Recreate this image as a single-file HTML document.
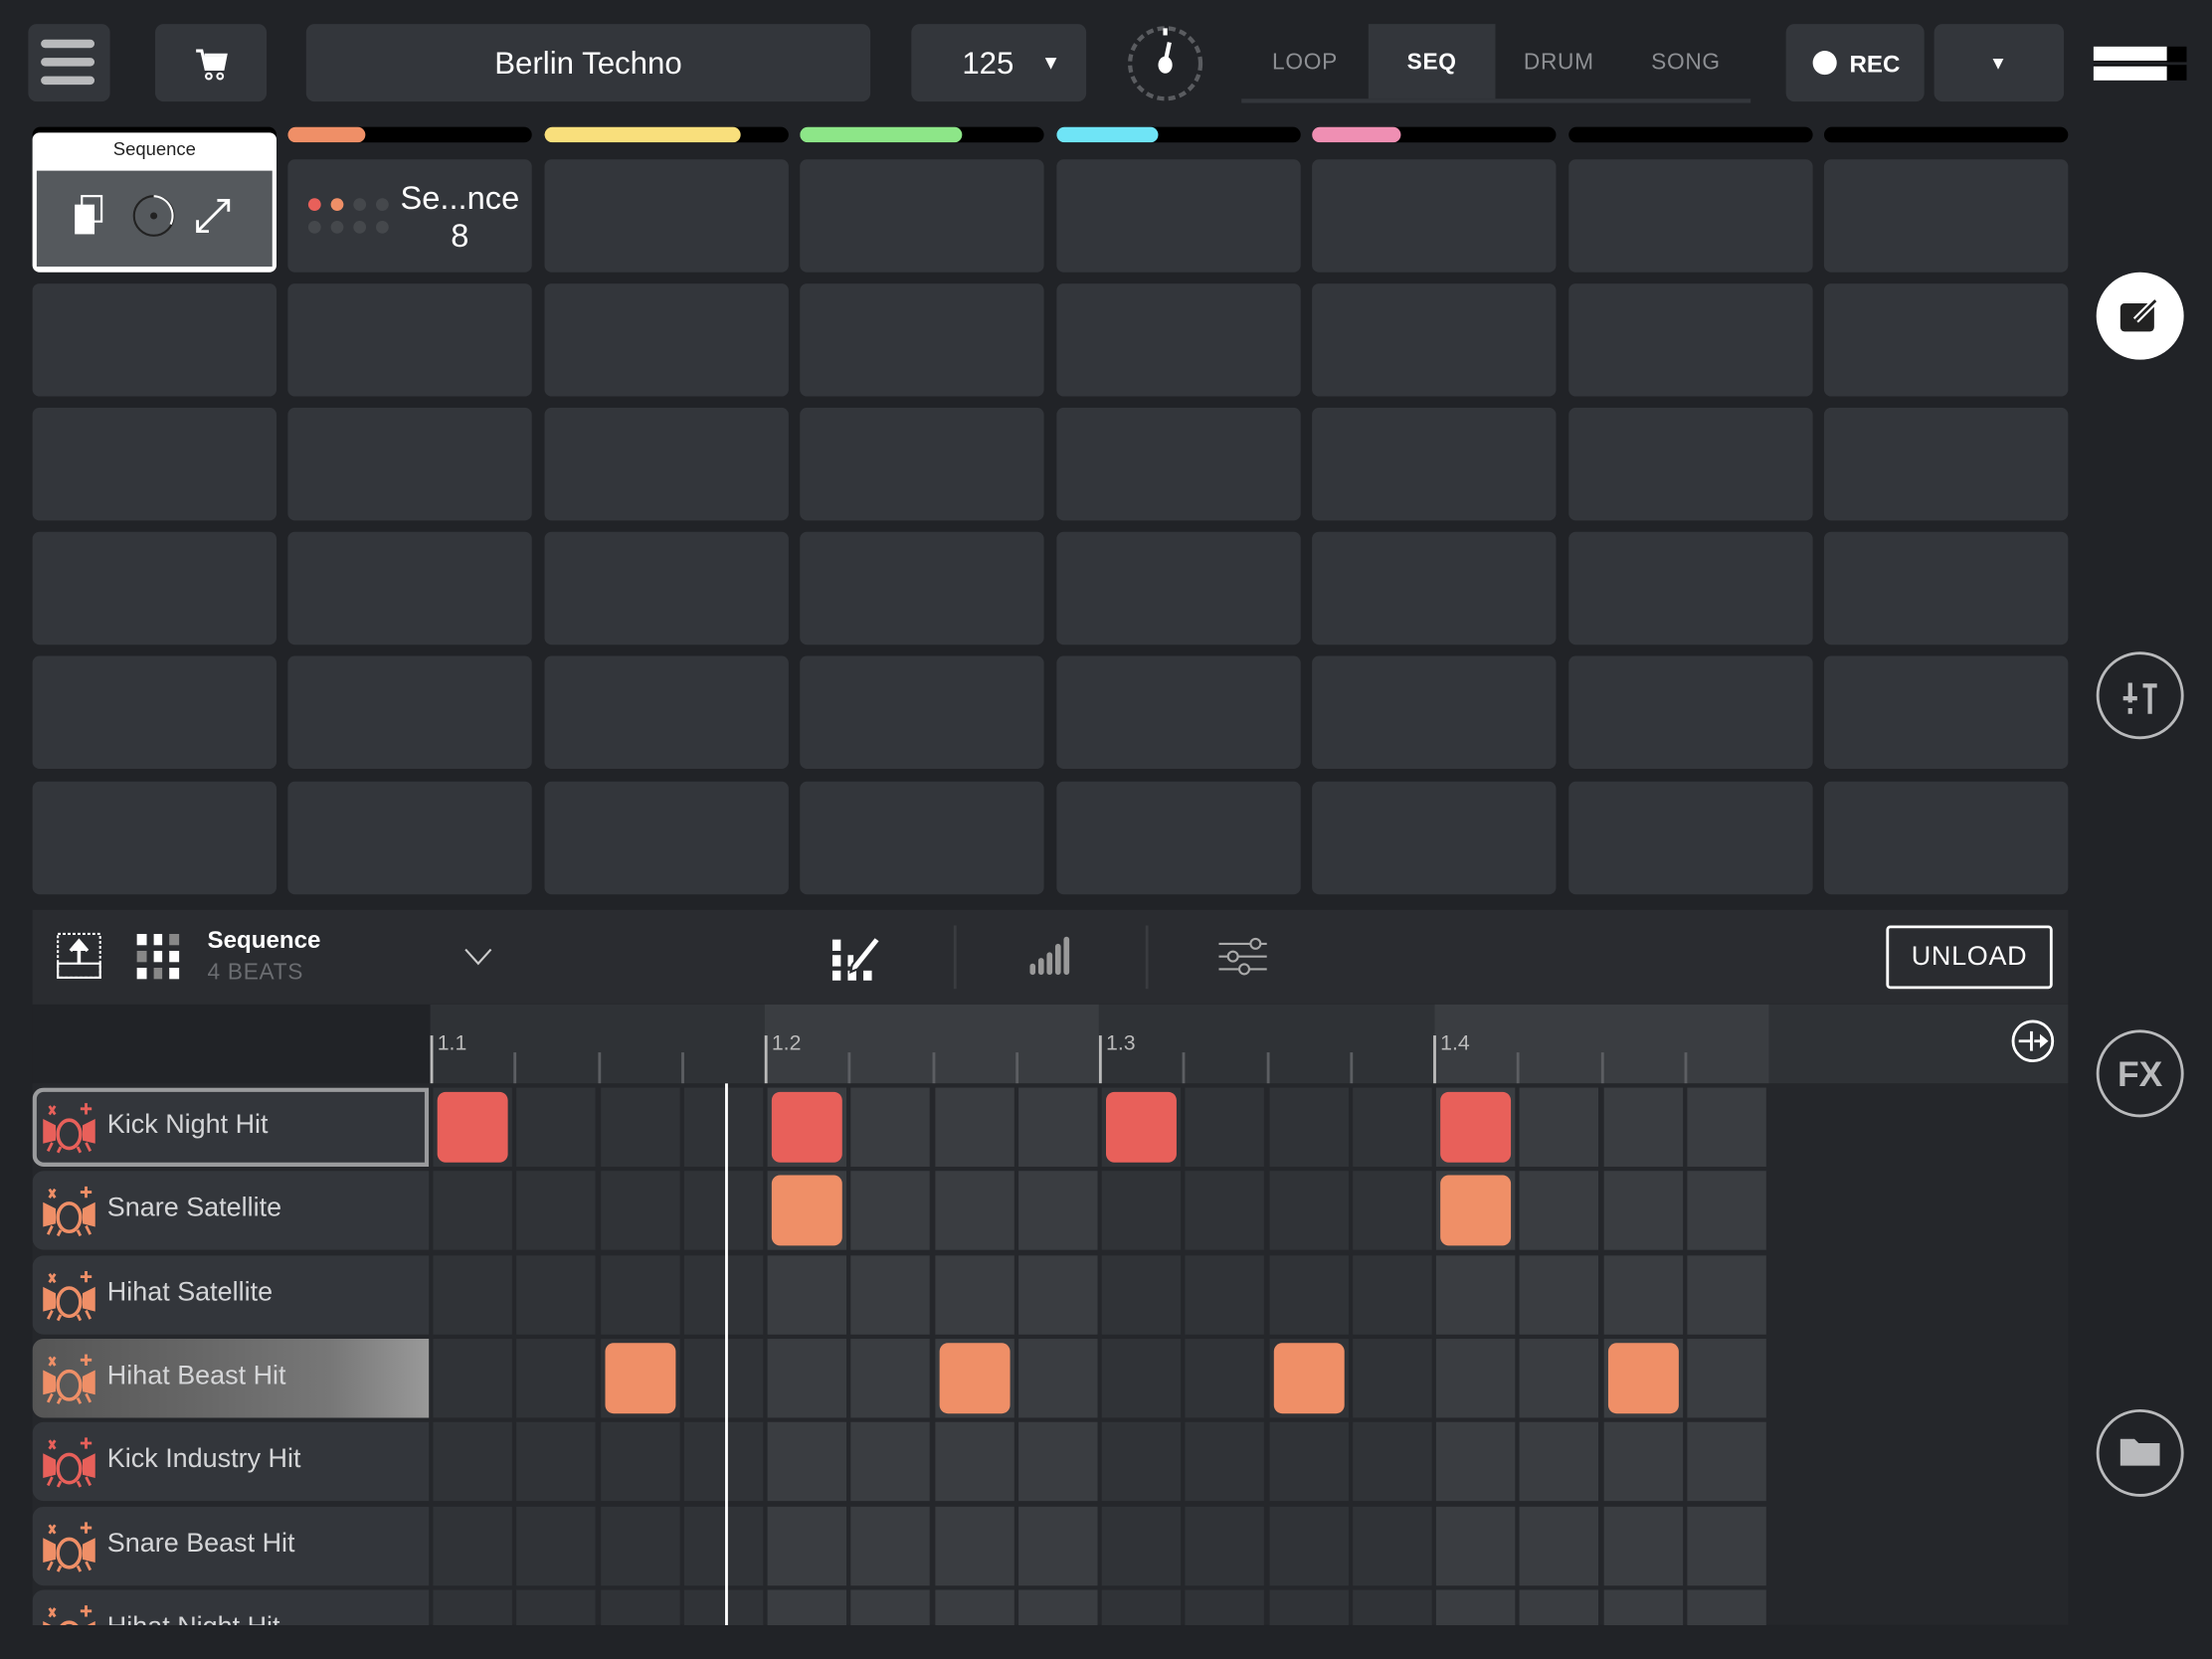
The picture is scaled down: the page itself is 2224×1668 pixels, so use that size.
<!DOCTYPE html>
<html><head><meta charset="utf-8">
<style>
html,body{margin:0;padding:0;background:#212327;overflow:hidden;width:2224px;height:1668px}
#s{position:absolute;left:0;top:0;width:1568px;height:1176px;transform:scale(1.41837);transform-origin:0 0;font-family:"Liberation Sans",sans-serif;color:#fff}
.a{position:absolute}
.btn{position:absolute;background:#33363b;border-radius:6px}
.tab{position:absolute;top:17px;height:53px;width:90px;line-height:56px;text-align:center;font-size:16px;color:#8d8f93;letter-spacing:.5px}
.bar{position:absolute;top:90px;height:11px;border-radius:6px;background:#000;overflow:hidden;width:173px}
.bar i{position:absolute;left:0;top:0;bottom:0;border-radius:6px}
.pad{position:absolute;width:173px;height:80px;border-radius:5px;background:#33363b}
.trk{position:absolute;left:23px;width:281px;height:56px;background:#33363b;border-radius:8px 0 0 8px;font-size:19px;color:#d4d5d7}
.trk span{position:absolute;left:53px;top:16px}
.trk svg{position:absolute;left:6px;top:9px}
.cell{position:absolute;width:56px;height:56px}
.note{position:absolute;width:50px;height:50px;border-radius:6px;margin:3px}
.circ{position:absolute;left:1486px;width:58px;height:58px;border:2px solid #b9babc;border-radius:50%}
</style></head><body><div id="s">
<!-- top bar -->
<div class="btn" style="left:20px;top:17px;width:58px;height:55px"></div>
<div class="a" style="left:29px;top:28px;width:38px;height:6px;background:#b9babc;border-radius:3px"></div>
<div class="a" style="left:29px;top:41px;width:38px;height:6px;background:#b9babc;border-radius:3px"></div>
<div class="a" style="left:29px;top:54px;width:38px;height:6px;background:#b9babc;border-radius:3px"></div>
<div class="btn" style="left:110px;top:17px;width:79px;height:55px"></div>
<svg class="a" style="left:137px;top:34px" width="26" height="24" viewBox="0 0 26 24"><path d="M2 2h4l3 13h12l2-10H8" fill="none" stroke="#fff" stroke-width="2.2"/><rect x="8" y="6" width="14" height="8" fill="#fff"/><circle cx="11" cy="20" r="2" fill="none" stroke="#fff" stroke-width="1.5"/><circle cx="19" cy="20" r="2" fill="none" stroke="#fff" stroke-width="1.5"/></svg>
<div class="btn" style="left:217px;top:17px;width:400px;height:55px;text-align:center;line-height:56px;font-size:22px">Berlin Techno</div>
<div class="btn" style="left:646px;top:17px;width:124px;height:55px"><span class="a" style="left:36px;top:15px;font-size:22px">125</span><span class="a" style="left:92px;top:19px;font-size:14px">▼</span></div>
<svg class="a" style="left:798px;top:17px" width="56" height="56" viewBox="0 0 56 56"><circle cx="28" cy="28" r="25" fill="none" stroke="#5a5c60" stroke-width="3" stroke-dasharray="5 3"/><path d="M28 3v5" stroke="#fff" stroke-width="3"/><line x1="31" y1="13" x2="28" y2="27" stroke="#fff" stroke-width="3"/><ellipse cx="28" cy="29" rx="5" ry="6" fill="#fff"/></svg>
<div class="a" style="left:880px;top:70px;width:361px;height:3px;background:#33363b"></div>
<div class="tab" style="left:880px">LOOP</div>
<div class="tab" style="left:970px;background:#33363b;color:#fff;font-weight:bold">SEQ</div>
<div class="tab" style="left:1060px">DRUM</div>
<div class="tab" style="left:1150px">SONG</div>
<div class="btn" style="left:1266px;top:17px;width:98px;height:55px"><div class="a" style="left:19px;top:19px;width:17px;height:17px;border-radius:50%;background:#fff"></div><span class="a" style="left:45px;top:19px;font-size:17px;font-weight:bold">REC</span></div>
<div class="btn" style="left:1371px;top:17px;width:92px;height:55px"><span class="a" style="left:39px;top:20px;font-size:13px">▼</span></div>
<div class="a" style="left:1484px;top:33px;width:66px;height:11px;background:#000"></div>
<div class="a" style="left:1484px;top:33px;width:52px;height:10px;background:#fff"></div>
<div class="a" style="left:1484px;top:46px;width:66px;height:11px;background:#000"></div>
<div class="a" style="left:1484px;top:47px;width:52px;height:10px;background:#fff"></div>
<!-- bars -->
<div class="bar" style="left:23px"></div>
<div class="bar" style="left:204px"><i style="width:55px;background:#ef8f67"></i></div>
<div class="bar" style="left:386px"><i style="width:139px;background:#f9df7c"></i></div>
<div class="bar" style="left:567px"><i style="width:115px;background:#8de688"></i></div>
<div class="bar" style="left:749px"><i style="width:72px;background:#6fe4f6"></i></div>
<div class="bar" style="left:930px"><i style="width:63px;background:#ef8fb3"></i></div>
<div class="bar" style="left:1112px"></div>
<div class="bar" style="left:1293px"></div>
<div id="pads"></div>
<!-- selected pad -->
<div class="a" style="left:23px;top:94px;width:173px;height:99px;background:#fff;border-radius:5px"></div>
<div class="a" style="left:23px;top:98px;width:173px;text-align:center;font-size:13px;color:#222">Sequence</div>
<div class="a" style="left:26px;top:121px;width:167px;height:68px;background:#55595d"></div>
<svg class="a" style="left:50px;top:136px" width="120" height="36" viewBox="0 0 120 36"><rect x="8" y="3" width="14" height="18" fill="none" stroke="#fff" stroke-width="1.5"/><rect x="3" y="9" width="14" height="21" fill="#fff"/><circle cx="59" cy="17" r="14" fill="none" stroke="#222" stroke-width="1.5"/><path d="M59 3a14 14 0 0 1 12 20" fill="none" stroke="#fff" stroke-width="1.5"/><circle cx="59" cy="17" r="2.5" fill="#222"/><path d="M90 28l22-22M104 6h8v8M90 20v8h8" fill="none" stroke="#fff" stroke-width="2"/></svg>
<!-- second pad content -->
<div class="a" style="left:218px;top:140px"><svg width="60" height="28"><circle cx="5" cy="5" r="4.5" fill="#e8605a"/><circle cx="21" cy="5" r="4.5" fill="#ef8f67"/><circle cx="37" cy="5" r="4.5" fill="#45484c"/><circle cx="53" cy="5" r="4.5" fill="#45484c"/><circle cx="5" cy="21" r="4.5" fill="#45484c"/><circle cx="21" cy="21" r="4.5" fill="#45484c"/><circle cx="37" cy="21" r="4.5" fill="#45484c"/><circle cx="53" cy="21" r="4.5" fill="#45484c"/></svg></div>
<div class="a" style="left:280px;top:127px;width:92px;text-align:center;font-size:23px;line-height:27px">Se...nce<br>8</div>
<!-- right circles -->
<div class="a" style="left:1486px;top:193px;width:62px;height:62px;border-radius:50%;background:#fff"></div>
<svg class="a" style="left:1500px;top:207px" width="34" height="34" viewBox="0 0 34 34"><rect x="3" y="8" width="24" height="20" rx="3" fill="#222"/><path d="M14 20l14-14" stroke="#fff" stroke-width="5"/><path d="M14 20l14-14" stroke="#222" stroke-width="2"/></svg>
<div class="circ" style="top:462px"></div>
<svg class="a" style="left:1500px;top:476px" width="34" height="34" viewBox="0 0 34 34"><path d="M5 19h10M10 8v14M19 10h10M24 10v20" stroke="#b9babc" stroke-width="3"/><path d="M10 26v4" stroke="#b9babc" stroke-width="3"/></svg>
<div class="circ" style="top:730px;text-align:center;line-height:60px;font-size:25px;color:#b9babc;font-weight:bold">FX</div>
<div class="circ" style="top:999px"></div>
<svg class="a" style="left:1502px;top:1017px" width="30" height="24" viewBox="0 0 30 24"><path d="M1 3h10l3 3h15v16H1z" fill="#b9babc"/></svg>
<!-- lower panel -->
<div class="a" style="left:23px;top:645px;width:1443px;height:67px;background:#2a2c30"></div>
<svg class="a" style="left:40px;top:661px" width="34" height="34" viewBox="0 0 34 34"><rect x="1" y="1" width="30" height="31" fill="none" stroke="#fff" stroke-width="1.5" stroke-dasharray="2 1.5"/><rect x="1" y="22" width="30" height="10" fill="none" stroke="#fff" stroke-width="1.5"/><path d="M16 22V8M10 13l6-7 6 7" fill="#fff" stroke="#fff" stroke-width="2.5"/></svg>
<svg class="a" style="left:97px;top:662px" width="34" height="34" viewBox="0 0 34 34"><g fill="#fff"><rect x="0" y="0" width="7" height="8"/><rect x="12" y="0" width="6" height="8"/><rect x="23" y="0" width="7" height="8" fill="#888"/><rect x="0" y="12" width="7" height="8" fill="#888"/><rect x="12" y="12" width="6" height="8"/><rect x="23" y="12" width="7" height="8"/><rect x="0" y="24" width="7" height="8"/><rect x="12" y="24" width="6" height="8" fill="#888"/><rect x="23" y="24" width="7" height="8"/></g></svg>
<div class="a" style="left:147px;top:657px;font-size:17px;font-weight:bold">Sequence</div>
<div class="a" style="left:147px;top:681px;font-size:16px;color:#6b6d71;letter-spacing:.5px">4 BEATS</div>
<svg class="a" style="left:329px;top:671px" width="20" height="14"><path d="M1 2l9 10 9-10" fill="none" stroke="#ccc" stroke-width="1.5"/></svg>
<svg class="a" style="left:590px;top:660px" width="36" height="36" viewBox="0 0 36 36"><g fill="#fff"><rect x="0" y="6" width="6" height="8"/><rect x="0" y="17" width="6" height="8"/><rect x="0" y="28" width="6" height="7"/><rect x="11" y="28" width="6" height="7"/><rect x="22" y="28" width="6" height="7"/><rect x="11" y="17" width="4" height="8"/></g><path d="M14 24l16-20 4 3-16 20-5 2z" fill="#fff" stroke="#2a2c30" stroke-width="1.5"/></svg>
<div class="a" style="left:676px;top:656px;width:2px;height:45px;background:#3a3c40"></div>
<svg class="a" style="left:730px;top:663px" width="30" height="30" viewBox="0 0 30 30"><g fill="#999"><rect x="0" y="20" width="4" height="8" rx="2"/><rect x="6" y="16" width="4" height="12" rx="2"/><rect x="12" y="12" width="4" height="16" rx="2"/><rect x="18" y="6" width="4" height="22" rx="2"/><rect x="24" y="1" width="4" height="27" rx="2"/></g></svg>
<div class="a" style="left:812px;top:656px;width:2px;height:45px;background:#3a3c40"></div>
<svg class="a" style="left:862px;top:664px" width="38" height="28" viewBox="0 0 38 28"><g stroke="#aaa" stroke-width="1.5" fill="#2a2c30"><path d="M2 5h34M2 14h34M2 23h34"/><circle cx="28" cy="5" r="3.5"/><circle cx="12" cy="14" r="3.5"/><circle cx="20" cy="23" r="3.5"/></g></svg>
<div class="a" style="left:1337px;top:656px;width:114px;height:41px;border:2px solid #fff;border-radius:3px;text-align:center;line-height:42px;font-size:19px;letter-spacing:.5px">UNLOAD</div>
<!-- ruler -->
<div class="a" style="left:23px;top:712px;width:1443px;height:58px;background:#212327"></div>
<div class="a" style="left:305px;top:712px;width:1161px;height:56px;background:#2a2c30"></div>
<div class="a" style="left:305px;top:712px;width:237px;height:56px;background:#2f3236"></div>
<div class="a" style="left:542px;top:712px;width:237px;height:56px;background:#3a3d41"></div>
<div class="a" style="left:779px;top:712px;width:238px;height:56px;background:#2f3236"></div>
<div class="a" style="left:1017px;top:712px;width:237px;height:56px;background:#3a3d41"></div>
<div class="a" style="left:1254px;top:712px;width:212px;height:56px;background:#2f3236"></div>
<div id="ruler"></div>
<svg class="a" style="left:1425px;top:722px" width="32" height="32" viewBox="0 0 32 32"><circle cx="16" cy="16" r="14" fill="none" stroke="#fff" stroke-width="2"/><path d="M6 16h8M15 9v14M17 16h5" stroke="#fff" stroke-width="2"/><path d="M21 11l6 5-6 5z" fill="#fff"/></svg>
<div class="a" style="left:23px;top:768px;width:1443px;height:384px;background:#25272b;overflow:hidden" id="grid"></div>
<div class="a" style="left:514px;top:768px;width:2px;height:384px;background:#fff"></div>
</div>
<script>
var P=document.getElementById('pads'),h='';
var xs=[23,204,386,567,749,930,1112,1293],ys=[113,201,289,377,465,554];
ys.forEach(function(y){xs.forEach(function(x){h+='<div class="pad" style="left:'+x+'px;top:'+y+'px"></div>'})});
P.innerHTML=h;
var R='',bx=[305,542,779,1017],lab=['1.1','1.2','1.3','1.4'];
for(var i=0;i<16;i++){var x=305+i*59.25;if(i%4==0){R+='<div class="a" style="left:'+(x)+'px;top:734px;width:2px;height:34px;background:#bbb"></div><div class="a" style="left:'+(x+5)+'px;top:731px;font-size:15px;color:#bbb">'+lab[i/4]+'</div>'}else{R+='<div class="a" style="left:'+x+'px;top:746px;width:2px;height:22px;background:#5c5e62"></div>'}}
document.getElementById('ruler').innerHTML=R;
var names=['Kick Night Hit','Snare Satellite','Hihat Satellite','Hihat Beast Hit','Kick Industry Hit','Snare Beast Hit','Hihat Night Hit'];
var cols=['#e8605a','#ef8f67','#ef8f67','#ef8f67','#e8605a','#ef8f67','#ef8f67'];
var notes={0:[0,4,8,12],1:[4,12],3:[2,6,10,14]};
var G='';
for(var r=0;r<7;r++){var y=3+r*59.3;
 var bg=r==3?'background:linear-gradient(90deg,#555 0%,#666 40%,#777 75%,#999 100%)':'';
 var bd=r==0?'box-shadow:inset 0 0 0 3px #9a9b9d;':'';
 G+='<div class="trk" style="left:0;top:'+y+'px;'+bg+';'+bd+'"><svg width="40" height="40" viewBox="0 0 40 40"><g fill="'+cols[r]+'" stroke="'+cols[r]+'"><path d="M6 4l4 6M10 4l-4 6M32 2v8M28 6h8" stroke-width="2"/><path d="M2 14l8 4v10l-8 2z"/><path d="M38 14l-8 4v10l8 2z"/><ellipse cx="20" cy="24" rx="8" ry="10" fill="none" stroke-width="2.5"/><path d="M8 30l-3 6M32 30l3 6M14 33l-2 4M26 33l2 4" stroke-width="2" fill="none"/></g></svg><span>'+names[r]+'</span></div>';
 for(var c=0;c<16;c++){var x=284+c*59.25;var lt=(Math.floor(c/4)%2==1);
  G+='<div class="cell" style="left:'+x+'px;top:'+y+'px;background:'+(lt?'#3a3d41':'#303337')+'"></div>';}
 if(notes[r])notes[r].forEach(function(c){G+='<div class="note" style="left:'+(284+c*59.25)+'px;top:'+y+'px;background:'+(r==0?'#e8605a':'#ef8f67')+'"></div>'});
}
document.getElementById('grid').innerHTML=G;
</script>
</body></html>
